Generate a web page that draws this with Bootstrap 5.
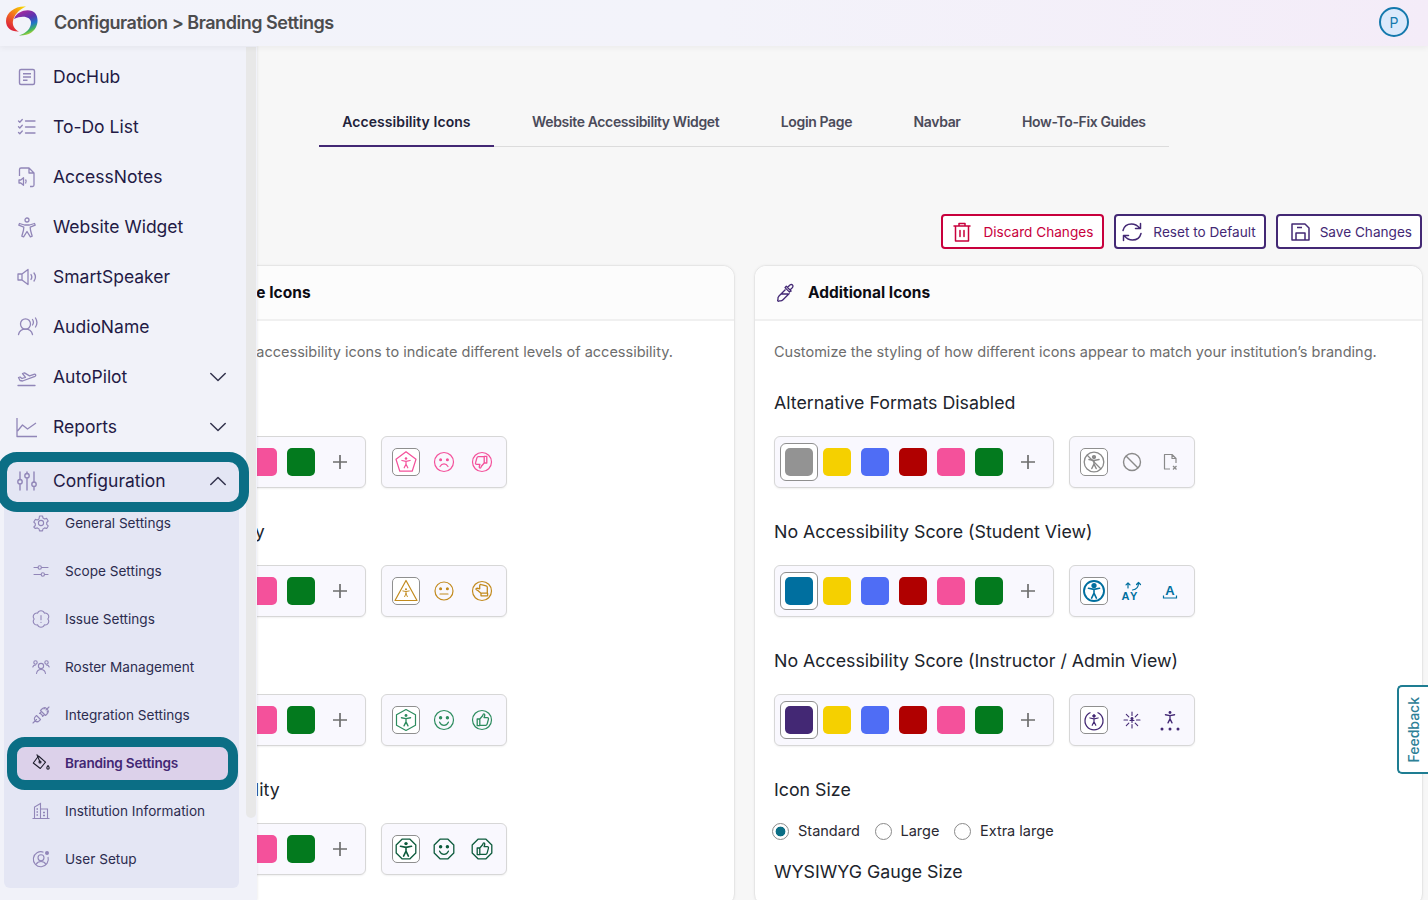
<!DOCTYPE html>
<html lang="en">
<head>
<meta charset="utf-8">
<title>Branding Settings</title>
<link href="https://cdn.jsdelivr.net/npm/bootstrap@5.3.0/dist/css/bootstrap.min.css" rel="stylesheet">
<style>
html,body{height:900px;overflow:hidden}
body{font-family:Inter,"Liberation Sans",sans-serif;background:#f7f7f7;color:#212529}
.topbar{height:46px;background:linear-gradient(90deg,#f2f3fa 0%,#f3f3fa 50%,#f4ecf8 100%);box-shadow:0 2px 6px rgba(0,0,0,.05);padding:0 19px 2px 6px;position:relative;z-index:3}
.crumb{font-size:18px;font-weight:600;color:#4c4c4e;margin-left:16px;letter-spacing:-.47px}
.avatar{width:30px;height:30px;border-radius:50%;border:2px solid #1479ad;background:#dbe9fb;color:#1479ad;font-size:14px}
.sidepanel{position:absolute;top:46px;left:0;width:257px;height:854px;background:#f1f2f9;box-shadow:1px 0 2px rgba(0,0,0,.06);z-index:2}
.sideinner{width:246px;padding-top:6px;position:relative;z-index:1}
.thumb{width:10px;height:771px;background:#e8e8e8;border-radius:0 0 6px 6px;margin-top:1px}
.topitem{height:50px;padding:0 20px 0 16px;font-size:17.5px;color:#231a45;gap:15px}
.topitem:hover,.topitem:focus{color:#231a45}
.ico22{width:22px;height:22px;color:#9186b8;flex:none}
.chev{width:16px;height:16px;margin-left:auto;color:#33334d;flex:none}
.cfgitem{height:40px;margin:10px 7px 0;padding:0 13px 2px 9px;background:#e4e6f4;border-radius:10px;outline:10px solid #0b6e85}
.subwrap{margin:-3px 7px 0 4px;padding-bottom:5px;background:#e4e6f4;border-radius:0 0 6px 6px}
.subitem{height:33px;margin:7.5px 11px 7.5px 13px;padding:0 0 0 15px;gap:15px;font-size:13.6px;color:#2c2c4f;border-radius:8px}
.subitem:hover,.subitem:focus{color:#2c2c4f}
.ico18{width:18px;height:18px;color:#9186b8;flex:none}
.subactive{background:#dcd1ea;outline:10px solid #0b6e85;color:#432874;font-weight:600;letter-spacing:-.2px}
.subactive:hover,.subactive:focus{color:#432874}
.subactive .ico18{color:#1d1d2b}
.mainpane{padding:51px 5px 0 66px}
.tabwrap{padding-right:1px}
.tabstrip{border-bottom:1px solid #dcdcdc;gap:15.500px;height:50px}
.tablink{height:50px;padding:0 23px;font-size:14px;font-weight:600;color:#4b4b5a;letter-spacing:-.37px;border-bottom:2px solid transparent}
.tablink:hover,.tablink:focus{color:#4b4b5a}
.tabactive{color:#22223a;border-bottom-color:#432874;margin-bottom:-1px;letter-spacing:.06px}
.tabactive:hover,.tabactive:focus{color:#22223a}
.actions{margin-top:67px;gap:10px;margin-bottom:16px;padding-right:1px}
.actbtn{height:35px;border:2px solid #432874;border-radius:4px;background:#fff;color:#432874;font-size:13.6px;padding:1px 8px 0 5px;gap:10px}
.actbtn:hover{background:#fff;color:#432874;border-color:#432874}
.actdanger{border-color:#c8003c;color:#c8003c;padding:1px 9px 0 8px;gap:10px}
.actdanger:hover{border-color:#c8003c;color:#c8003c}
.actsave{padding:1px 8px 0 11px;gap:9px}
.ico24{width:22px;height:22px;flex:none}
.pairrow{--bs-gutter-x:19px}
.panel{border:1px solid #e6e6e6;border-radius:12px;background:#fff;box-shadow:0 0 3px rgba(0,0,0,.05)}
.panel .card-header{height:55px;background:#fcfcfc;border-bottom:2px solid #f0f0f0;padding:0 21px;font-size:15.5px;font-weight:700;color:#0c0c14;gap:12px;border-radius:12px 12px 0 0}
.panel .card-body{padding:19px 19px 0}
.hdico{width:20px;height:20px;color:#432874;flex:none}
.blurb{font-size:14.530px;line-height:24px;color:#6d6d6d;margin:0 0 25px}
.grouptitle{font-size:17.8px;line-height:28px;font-weight:400;color:#20242c;margin:0 0 19px}
.pickrow{margin-bottom:30px;gap:15px}
.pickbox{height:52px;background:#f9f8fe;border:1px solid #d7d7d7;border-radius:6px;box-shadow:0 1px 2px rgba(0,0,0,.06)}
.colorbox{width:280px;padding:0 7px 0 5px}
.slot{width:38px;height:38px;border-radius:6px;border:1px solid transparent}
.slotsel{border-color:#8f8f8f;background:#fff}
.chip{width:28px;height:28px;border-radius:5px}
.plusico{width:16px;height:16px;color:#6e6e6e;margin-left:2px}
.iconbox{width:126px;padding:0 9px 0 10px;gap:10px}
.iconslot{width:28px;height:28px;border-radius:5px;border:1px solid transparent}
.iconslotsel{border-color:#8f8f8f;background:#fff}
.glyph{width:24px;height:24px;flex:none}
.radios{font-size:14.530px;margin:16px 0 14px -2px;height:24px;gap:14.500px}
.radios .form-check{margin:0;padding:0;gap:9px;min-height:0}
.radios .form-check-input{width:17px;height:17px;margin:0;float:none;background-color:#fff;border:1px solid #8a8a8a}
.radios .form-check-input:checked{background-color:#fff;border-color:#8a8a8a;background-image:radial-gradient(circle,#0b6e85 0 4.6px,transparent 5.2px)}
.radios .form-check-input:focus{box-shadow:none}
.radios .form-check-label{color:#2a2a33}
.feedback{position:absolute;right:0;top:685px;width:31px;height:89px;background:#fff;border:2px solid #1e7d92;border-right:0;border-radius:5px 0 0 5px;color:#2d8096;font-size:14px;font-weight:500;z-index:4}
.feedback span{writing-mode:vertical-rl;transform:rotate(180deg)}
.c-gray{color:#8a8a8a}.c-blue{color:#006f9f}.c-purple{color:#432874}.c-pink{color:#f4519b}.c-amber{color:#c28a1d}.c-green{color:#2c8c5e}.c-dark{color:#0d5b3c}
svg{display:block}
svg text{font-family:"Liberation Sans",sans-serif;font-weight:700}
</style>
</head>
<body>
<svg width="0" height="0" class="position-absolute">
 <defs>
  <linearGradient id="lgA" x1="0.8" y1="0" x2="0.2" y2="1"><stop offset="0" stop-color="#f7d300"/><stop offset=".45" stop-color="#f36f1f"/><stop offset="1" stop-color="#d8143f"/></linearGradient>
  <linearGradient id="lgB" x1="0.2" y1="0" x2="0.6" y2="1"><stop offset="0" stop-color="#b5289a"/><stop offset=".4" stop-color="#5a34b0"/><stop offset=".65" stop-color="#1f74c8"/><stop offset=".85" stop-color="#45b85a"/><stop offset="1" stop-color="#d9dc2c"/></linearGradient>
  <symbol id="man" viewBox="0 0 24 24"><circle cx="12" cy="6.600" r="1.700" fill="currentColor"/><path d="M6.500 9.300l5.500 1.100 5.500-1.100M12 10.400v3.800M12 14.200l-2.400 4.900M12 14.200l2.400 4.900" fill="none" stroke="currentColor" stroke-width="1.600" stroke-linecap="round" stroke-linejoin="round"/></symbol>
  <symbol id="up" viewBox="0 0 24 24"><path d="M7.200 11h2.600v6.600H7.200zM9.800 11l2.800-3.200c.4-1.200.6-2 1.300-1.900.9.100 1 1.100.7 2.100l-.5 1.700h3.200c1 0 1.400.8 1.100 1.600l-1.300 4.800c-.2.700-.7 1.200-1.400 1.200H9.800" fill="none" stroke="currentColor" stroke-width="1.300" stroke-linejoin="round"/></symbol>
  <symbol id="sm" viewBox="0 0 24 24"><circle cx="8.600" cy="9.800" r="1.100" fill="currentColor"/><circle cx="15.400" cy="9.800" r="1.100" fill="currentColor"/><path d="M7.600 14.200c1.100 2.200 2.700 3.200 4.400 3.200s3.300-1 4.400-3.200" fill="none" stroke="currentColor" stroke-width="1.300" stroke-linecap="round"/></symbol>
 </defs>
</svg>

<header class="topbar d-flex align-items-center">
 <svg width="32" height="32" viewBox="0 0 32 32">
  <path d="M20 .5C10 -.5 0 6 0 15c0 7 5.500 11 13 10.500C9.500 24 6 20 7 15 8 9 13 3.500 20 .5z" fill="url(#lgA)"/>
  <path d="M8 13C11 5.500 20 3 26 5c5 2 6.500 8 5 13.500C29 26 22 30 13 29.500 20 27.500 25 22.500 25 16.500 25 11 17 8.500 8 13z" fill="url(#lgB)"/>
 </svg>
 <span class="crumb">Configuration &gt; Branding Settings</span>
 <span class="avatar ms-auto d-flex align-items-center justify-content-center">P</span>
</header>

<aside class="sidepanel d-flex align-items-start">
 <nav class="sideinner">
  <ul class="nav flex-column">
   <li class="nav-item"><a class="nav-link topitem d-flex align-items-center" href="#">
    <svg class="ico22" viewBox="0 0 22 22" fill="none" stroke="currentColor" stroke-width="1.400"><rect x="3.500" y="3.500" width="15" height="15" rx="1.500"/><path d="M7 7.800h8M7 11h8M7 14.200h4.500"/></svg>DocHub</a></li>
   <li class="nav-item"><a class="nav-link topitem d-flex align-items-center" href="#">
    <svg class="ico22" viewBox="0 0 22 22" fill="none" stroke="currentColor" stroke-width="1.300" stroke-linecap="round" stroke-linejoin="round"><path d="M2.500 5l1.300 1.300L6.300 3.500M2.500 10.700l1.300 1.300 2.500-2.800M2.500 16.500l1.300 1.300 2.500-2.800M9.500 5h9.500M9.500 11h9.500M9.500 17h9.500"/></svg>To-Do List</a></li>
   <li class="nav-item"><a class="nav-link topitem d-flex align-items-center" href="#">
    <svg class="ico22" viewBox="0 0 22 22" fill="none" stroke="currentColor" stroke-width="1.300" stroke-linejoin="round"><path d="M3.500 10V3.500a1.500 1.500 0 0 1 1.500-1.500h8l5 5v12a1.500 1.500 0 0 1-1.500 1.500H14M13 2v5h5"/><path d="M3 14h1.800l2.700-2.300v7.600L4.800 17H3zM9.500 13.500c1 1.300 1 2.700 0 4"/></svg>AccessNotes</a></li>
   <li class="nav-item"><a class="nav-link topitem d-flex align-items-center" href="#">
    <svg class="ico22" viewBox="0 0 22 22" fill="none" stroke="currentColor" stroke-width="1.300" stroke-linejoin="round"><circle cx="11" cy="4" r="2"/><path d="M3.500 7.500l5 1.500h5l5-1.500.7 1.700-5 2 .3 3 1.700 6-1.800.7-3.400-5.400-3.400 5.400-1.800-.7 1.700-6 .3-3-5-2z"/></svg>Website Widget</a></li>
   <li class="nav-item"><a class="nav-link topitem d-flex align-items-center" href="#">
    <svg class="ico22" viewBox="0 0 22 22" fill="none" stroke="currentColor" stroke-width="1.300" stroke-linejoin="round" stroke-linecap="round"><path d="M2 8h4l6-4.500v15L6 14H2zM6 8v6M15 8.500c1 1.500 1 3.500 0 5M18 7c1.800 2.500 1.800 5.500 0 8"/></svg>SmartSpeaker</a></li>
   <li class="nav-item"><a class="nav-link topitem d-flex align-items-center" href="#">
    <svg class="ico22" viewBox="0 0 22 22" fill="none" stroke="currentColor" stroke-width="1.300" stroke-linecap="round"><ellipse cx="9.500" cy="8" rx="5" ry="5.200"/><path d="M2.500 18.500c.7-3 3.500-5.300 7-5.300s6.300 2.300 7 5.300M16.500 3.500c1 1.500 1 4 0 5.500M19.500 2c1.600 2.500 1.600 6.500 0 9"/></svg>AudioName</a></li>
   <li class="nav-item"><a class="nav-link topitem d-flex align-items-center" href="#">
    <svg class="ico22" viewBox="0 0 22 22" fill="none" stroke="currentColor" stroke-width="1.300" stroke-linejoin="round" stroke-linecap="round"><path d="M2 19.500h17M4 14.500l-1.500-3 1.500-.5 2 1.500 3.500-1.200-3-3.800 2-.6 5 3 4.500-1.600c1.500-.5 2.500 1.300 1 2L6.500 15z"/></svg>AutoPilot
    <svg class="chev" viewBox="0 0 16 16" fill="none" stroke="currentColor" stroke-width="1.500" stroke-linecap="round" stroke-linejoin="round"><path d="M.8 4.500L8 11.500l7.200-7"/></svg></a></li>
   <li class="nav-item"><a class="nav-link topitem d-flex align-items-center" href="#">
    <svg class="ico22" viewBox="0 0 22 22" fill="none" stroke="currentColor" stroke-width="1.300" stroke-linejoin="round"><path d="M1 2v18.500h20M1.500 15l5-6 5 4 8.500-6"/></svg>Reports
    <svg class="chev" viewBox="0 0 16 16" fill="none" stroke="currentColor" stroke-width="1.500" stroke-linecap="round" stroke-linejoin="round"><path d="M.8 4.500L8 11.500l7.200-7"/></svg></a></li>
   <li class="nav-item"><a class="nav-link topitem cfgitem d-flex align-items-center" href="#">
    <svg class="ico22" viewBox="0 0 22 22" fill="none" stroke="currentColor" stroke-width="1.400" stroke-linecap="round"><path d="M4 2v7.500M4 14v6M11 2v1.500M11 8v12M18 2v10M18 16.500V20"/><circle cx="4" cy="11.700" r="2.200"/><circle cx="11" cy="5.700" r="2.200"/><circle cx="18" cy="14.200" r="2.200"/></svg>Configuration
    <svg class="chev" viewBox="0 0 16 16" fill="none" stroke="currentColor" stroke-width="1.500" stroke-linecap="round" stroke-linejoin="round"><path d="M.8 11.500L8 4.500l7.200 7"/></svg></a></li>
  </ul>
  <ul class="nav flex-column subwrap">
   <li class="nav-item"><a class="nav-link subitem d-flex align-items-center" href="#">
    <svg class="ico18" viewBox="0 0 18 18" fill="none" stroke="currentColor" stroke-width="1.100" stroke-linejoin="round"><circle cx="9" cy="9" r="2.600"/><path d="M7.500 2h3l.5 2 1.700 1 2-.6 1.500 2.600-1.500 1.500v1.900l1.500 1.500-1.500 2.600-2-.6-1.700 1-.5 2h-3l-.5-2-1.700-1-2 .6L1.800 13l1.500-1.500V9.600L1.800 8l1.500-2.600 2 .6 1.700-1z"/></svg>General Settings</a></li>
   <li class="nav-item"><a class="nav-link subitem d-flex align-items-center" href="#">
    <svg class="ico18" viewBox="0 0 18 18" fill="none" stroke="currentColor" stroke-width="1.100" stroke-linecap="round"><path d="M2 5.500h4M9.500 5.500H16M2 12.500h7M12.500 12.500H16"/><circle cx="7.700" cy="5.500" r="1.700"/><circle cx="10.800" cy="12.500" r="1.700"/></svg>Scope Settings</a></li>
   <li class="nav-item"><a class="nav-link subitem d-flex align-items-center" href="#">
    <svg class="ico18" viewBox="0 0 18 18" fill="none" stroke="currentColor" stroke-width="1.100" stroke-linecap="round" stroke-linejoin="round"><path d="M5.600 3.100A3.600 3.600 0 0 1 12.400 3.100 3.600 3.600 0 0 1 15.800 9 3.600 3.600 0 0 1 12.400 14.900 3.600 3.600 0 0 1 5.600 14.900 3.600 3.600 0 0 1 2.200 9 3.600 3.600 0 0 1 5.600 3.100z"/><path d="M9 5.500v4.300M9 12.300v.2"/></svg>Issue Settings</a></li>
   <li class="nav-item"><a class="nav-link subitem d-flex align-items-center" href="#">
    <svg class="ico18" viewBox="0 0 18 18" fill="none" stroke="currentColor" stroke-width="1.100" stroke-linecap="round"><circle cx="9" cy="8" r="2.600"/><path d="M4.500 15.500c.4-2.500 2.200-4 4.500-4s4.100 1.500 4.500 4"/><circle cx="3.500" cy="4.500" r="1.700"/><circle cx="14.500" cy="4.500" r="1.700"/><path d="M.8 9c.4-1.300 1.300-2 2.700-2M17.200 9c-.4-1.300-1.300-2-2.700-2"/></svg>Roster Management</a></li>
   <li class="nav-item"><a class="nav-link subitem d-flex align-items-center" href="#">
    <svg class="ico18" viewBox="0 0 18 18" fill="none" stroke="currentColor" stroke-width="1.100" stroke-linecap="round" stroke-linejoin="round"><path d="M1 17l3.500-3.500M4.500 9.500l4 4-1.300 1.300a2.800 2.800 0 0 1-4-4zM8 7l3 3M7.500 7.500l1.700-1.700M10.500 10.500l1.700-1.700M8.500 4.500l5 5 1.500-1.500a3.500 3.500 0 0 0-5-5zM14 4l3-3M13 1.500l-1 1.500M16.500 5l-1.500 1"/></svg>Integration Settings</a></li>
   <li class="nav-item"><a class="nav-link subitem subactive d-flex align-items-center" href="#">
    <svg class="ico18" viewBox="0 0 18 18" fill="none" stroke="currentColor" stroke-width="1.100" stroke-linejoin="round" stroke-linecap="round"><path d="M6.500 2l7 6.200-5.200 6.300L1.300 9z"/><circle cx="8" cy="8" r="1"/><path d="M5 .8L7.700 7.200"/><path d="M16 11.500c.7 1 1.200 1.700 1.200 2.400a1.200 1.200 0 0 1-2.400 0c0-.7.500-1.400 1.200-2.400z"/></svg>Branding Settings</a></li>
   <li class="nav-item"><a class="nav-link subitem d-flex align-items-center" href="#">
    <svg class="ico18" viewBox="0 0 18 18" fill="none" stroke="currentColor" stroke-width="1.100"><path d="M.5 16.500h17M2.500 16.500V5l6-3.500v15M8.500 7h7v9.500"/><path d="M4.500 7h1.500M4.500 10h1.500M4.500 13h1.500M11 10.500h2M11 13.500h2" stroke-width="1.300"/></svg>Institution Information</a></li>
   <li class="nav-item"><a class="nav-link subitem d-flex align-items-center" href="#">
    <svg class="ico18" viewBox="0 0 18 18" fill="none" stroke="currentColor" stroke-width="1.100"><path d="M11.500 2.200A7.500 7.500 0 1 0 16 7"/><circle cx="9" cy="7.800" r="3"/><path d="M4 14.500c1-2 2.800-3 5-3s4 1 5 3"/><circle cx="15" cy="3" r="2" fill="currentColor" stroke="none"/></svg>User Setup</a></li>
  </ul>
 </nav>
 <div class="thumb"></div>
</aside>

<main class="mainpane">
 <div class="d-flex justify-content-center tabwrap">
  <nav class="nav tabstrip">
   <a class="nav-link tablink tabactive d-flex align-items-center" href="#">Accessibility Icons</a>
   <a class="nav-link tablink d-flex align-items-center" href="#">Website Accessibility Widget</a>
   <a class="nav-link tablink d-flex align-items-center" href="#">Login Page</a>
   <a class="nav-link tablink d-flex align-items-center" href="#">Navbar</a>
   <a class="nav-link tablink d-flex align-items-center" href="#">How-To-Fix Guides</a>
  </nav>
 </div>

 <div class="d-flex justify-content-end actions">
  <button type="button" class="btn actbtn actdanger d-flex align-items-center">
   <svg class="ico24" viewBox="0 0 22 22" fill="none" stroke="currentColor" stroke-width="1.500" stroke-linecap="round" stroke-linejoin="round"><path d="M3 5h16M8 5V2.500h6V5M4.500 5v15h13V5M9 9.500v6M13 9.500v6"/></svg>Discard Changes</button>
  <button type="button" class="btn actbtn d-flex align-items-center">
   <svg class="ico24" viewBox="0 0 22 22" fill="none" stroke="currentColor" stroke-width="1.500" stroke-linecap="round" stroke-linejoin="round"><path d="M2 9.500C3 5.500 6.500 3 10.500 3c3.500 0 6 1.500 8 4M19.500 2.500V7.500h-5M20 12.500c-1 4-4.500 6.500-8.500 6.500-3.500 0-6-1.500-8-4M2.500 19.500v-5h5"/></svg>Reset to Default</button>
  <button type="button" class="btn actbtn actsave d-flex align-items-center">
   <svg class="ico24" viewBox="0 0 22 22" fill="none" stroke="currentColor" stroke-width="1.500" stroke-linejoin="round"><path d="M3 3h13l4 4v12H3zM7 19v-7h9v7M8 6.500h5"/></svg>Save Changes</button>
 </div>

 <div class="row pairrow">
  <div class="col-6">
   <section class="card panel">
    <div class="card-header d-flex align-items-center">
     <svg class="hdico" viewBox="0 0 20 20" fill="none" stroke="currentColor" stroke-width="1.300"><circle cx="10" cy="10" r="7"/></svg>Accessibility Score Icons</div>
    <div class="card-body">
     <p class="blurb">Customize the styling of accessibility icons to indicate different levels of accessibility.</p>

     <h3 class="grouptitle">Low Accessibility</h3>
     <div class="d-flex pickrow">
      <div class="pickbox colorbox d-flex align-items-center">
       <span class="slot slotsel d-flex align-items-center justify-content-center"><span class="chip" style="background:#f4519b"></span></span>
       <span class="slot d-flex align-items-center justify-content-center"><span class="chip" style="background:#f5d000"></span></span>
       <span class="slot d-flex align-items-center justify-content-center"><span class="chip" style="background:#4f6df5"></span></span>
       <span class="slot d-flex align-items-center justify-content-center"><span class="chip" style="background:#b00000"></span></span>
       <span class="slot d-flex align-items-center justify-content-center"><span class="chip" style="background:#f4519b"></span></span>
       <span class="slot d-flex align-items-center justify-content-center"><span class="chip" style="background:#037a1e"></span></span>
       <span class="slot d-flex align-items-center justify-content-center"><svg class="plusico" viewBox="0 0 16 16" stroke="currentColor" stroke-width="1.700"><path d="M8 1v14M1 8h14"/></svg></span>
      </div>
      <div class="pickbox iconbox d-flex align-items-center c-pink">
       <span class="iconslot iconslotsel d-flex align-items-center justify-content-center"><svg class="glyph" viewBox="0 0 24 24" fill="none"><path d="M12 1.800l10 7.400-3.800 12H5.800L2 9.200z" stroke="currentColor" stroke-width="1.200" stroke-linejoin="round"/><use href="#man" x="3" y="3.500" width="18" height="18"/></svg></span>
       <span class="iconslot d-flex align-items-center justify-content-center"><svg class="glyph" viewBox="0 0 24 24" fill="none" stroke="currentColor" stroke-width="1.200"><circle cx="12" cy="12" r="9.500"/><circle cx="8.600" cy="9.800" r=".9" fill="currentColor"/><circle cx="15.400" cy="9.800" r=".9" fill="currentColor"/><path d="M8 16.500c1-1.800 2.400-2.700 4-2.700s3 .9 4 2.700" stroke-linecap="round"/></svg></span>
       <span class="iconslot d-flex align-items-center justify-content-center"><svg class="glyph" viewBox="0 0 24 24" fill="none" stroke="currentColor" stroke-width="1.200"><circle cx="12" cy="12" r="9.500"/><use href="#up" transform="rotate(180 12 12)"/></svg></span>
      </div>
     </div>

     <h3 class="grouptitle">Medium Accessibility</h3>
     <div class="d-flex pickrow">
      <div class="pickbox colorbox d-flex align-items-center">
       <span class="slot slotsel d-flex align-items-center justify-content-center"><span class="chip" style="background:#c28a1d"></span></span>
       <span class="slot d-flex align-items-center justify-content-center"><span class="chip" style="background:#f5d000"></span></span>
       <span class="slot d-flex align-items-center justify-content-center"><span class="chip" style="background:#4f6df5"></span></span>
       <span class="slot d-flex align-items-center justify-content-center"><span class="chip" style="background:#b00000"></span></span>
       <span class="slot d-flex align-items-center justify-content-center"><span class="chip" style="background:#f4519b"></span></span>
       <span class="slot d-flex align-items-center justify-content-center"><span class="chip" style="background:#037a1e"></span></span>
       <span class="slot d-flex align-items-center justify-content-center"><svg class="plusico" viewBox="0 0 16 16" stroke="currentColor" stroke-width="1.700"><path d="M8 1v14M1 8h14"/></svg></span>
      </div>
      <div class="pickbox iconbox d-flex align-items-center c-amber">
       <span class="iconslot iconslotsel d-flex align-items-center justify-content-center"><svg class="glyph" viewBox="0 0 24 24" fill="none"><path d="M12 1.500L23 21.500H1z" stroke="currentColor" stroke-width="1.200" stroke-linejoin="round"/><use href="#man" x="5" y="6.500" width="14" height="14"/></svg></span>
       <span class="iconslot d-flex align-items-center justify-content-center"><svg class="glyph" viewBox="0 0 24 24" fill="none" stroke="currentColor" stroke-width="1.200"><circle cx="12" cy="12" r="9"/><circle cx="8.600" cy="9.800" r=".9" fill="currentColor"/><circle cx="15.400" cy="9.800" r=".9" fill="currentColor"/><path d="M8 15h8" stroke-linecap="round"/></svg></span>
       <span class="iconslot d-flex align-items-center justify-content-center"><svg class="glyph" viewBox="0 0 24 24" fill="none" stroke="currentColor" stroke-width="1.200"><circle cx="12" cy="12" r="9.500"/><use href="#up" transform="rotate(-90 12 12)"/></svg></span>
      </div>
     </div>

     <h3 class="grouptitle">High Accessibility</h3>
     <div class="d-flex pickrow">
      <div class="pickbox colorbox d-flex align-items-center">
       <span class="slot slotsel d-flex align-items-center justify-content-center"><span class="chip" style="background:#2c8c5e"></span></span>
       <span class="slot d-flex align-items-center justify-content-center"><span class="chip" style="background:#f5d000"></span></span>
       <span class="slot d-flex align-items-center justify-content-center"><span class="chip" style="background:#4f6df5"></span></span>
       <span class="slot d-flex align-items-center justify-content-center"><span class="chip" style="background:#b00000"></span></span>
       <span class="slot d-flex align-items-center justify-content-center"><span class="chip" style="background:#f4519b"></span></span>
       <span class="slot d-flex align-items-center justify-content-center"><span class="chip" style="background:#037a1e"></span></span>
       <span class="slot d-flex align-items-center justify-content-center"><svg class="plusico" viewBox="0 0 16 16" stroke="currentColor" stroke-width="1.700"><path d="M8 1v14M1 8h14"/></svg></span>
      </div>
      <div class="pickbox iconbox d-flex align-items-center c-green">
       <span class="iconslot iconslotsel d-flex align-items-center justify-content-center"><svg class="glyph" viewBox="0 0 24 24" fill="none"><path d="M12 1.500l9.500 5.300v10.400L12 22.500l-9.500-5.300V6.800z" stroke="currentColor" stroke-width="1.200" stroke-linejoin="round"/><use href="#man" x="2" y="2" width="20" height="20"/></svg></span>
       <span class="iconslot d-flex align-items-center justify-content-center"><svg class="glyph" viewBox="0 0 24 24" fill="none" stroke="currentColor" stroke-width="1.200"><circle cx="12" cy="12" r="9.500"/><use href="#sm"/></svg></span>
       <span class="iconslot d-flex align-items-center justify-content-center"><svg class="glyph" viewBox="0 0 24 24" fill="none" stroke="currentColor" stroke-width="1.200"><circle cx="12" cy="12" r="9.500"/><use href="#up"/></svg></span>
      </div>
     </div>

     <h3 class="grouptitle">Very High Accessibility</h3>
     <div class="d-flex pickrow">
      <div class="pickbox colorbox d-flex align-items-center">
       <span class="slot slotsel d-flex align-items-center justify-content-center"><span class="chip" style="background:#0d5b3c"></span></span>
       <span class="slot d-flex align-items-center justify-content-center"><span class="chip" style="background:#f5d000"></span></span>
       <span class="slot d-flex align-items-center justify-content-center"><span class="chip" style="background:#4f6df5"></span></span>
       <span class="slot d-flex align-items-center justify-content-center"><span class="chip" style="background:#b00000"></span></span>
       <span class="slot d-flex align-items-center justify-content-center"><span class="chip" style="background:#f4519b"></span></span>
       <span class="slot d-flex align-items-center justify-content-center"><span class="chip" style="background:#037a1e"></span></span>
       <span class="slot d-flex align-items-center justify-content-center"><svg class="plusico" viewBox="0 0 16 16" stroke="currentColor" stroke-width="1.700"><path d="M8 1v14M1 8h14"/></svg></span>
      </div>
      <div class="pickbox iconbox d-flex align-items-center c-dark">
       <span class="iconslot iconslotsel d-flex align-items-center justify-content-center"><svg class="glyph" viewBox="0 0 24 24" fill="none"><path d="M8 2.200h8l5.800 5.800v8L16 21.800H8L2.200 16V8z" stroke="currentColor" stroke-width="1.300" stroke-linejoin="round"/><use href="#man"/></svg></span>
       <span class="iconslot d-flex align-items-center justify-content-center"><svg class="glyph" viewBox="0 0 24 24" fill="none" stroke="currentColor" stroke-width="1.300"><path d="M8 2.200h8l5.800 5.800v8L16 21.800H8L2.200 16V8z" stroke-linejoin="round"/><use href="#sm"/></svg></span>
       <span class="iconslot d-flex align-items-center justify-content-center"><svg class="glyph" viewBox="0 0 24 24" fill="none" stroke="currentColor" stroke-width="1.300"><path d="M8 2.200h8l5.800 5.800v8L16 21.800H8L2.200 16V8z" stroke-linejoin="round"/><use href="#up"/></svg></span>
      </div>
     </div>
    </div>
   </section>
  </div>

  <div class="col-6">
   <section class="card panel">
    <div class="card-header d-flex align-items-center">
     <svg class="hdico" viewBox="0 0 20 20" fill="none" stroke="currentColor" stroke-width="1.300" stroke-linejoin="round"><path d="M11.500 4.500l4 4M12.500 3.500c1.500-2 3-2.500 4-1.500s.5 2.500-1.500 4l-1 1 .8.800-1.300 1.300-4.500-4.500 1.300-1.300.8.800zM9.500 6.500L3 13c-1 1-1.300 2.300-1 3.500-.5.700-.5 1.200 0 1.500.3.300.8.300 1.500-.2 1.200.3 2.500 0 3.500-1l6.500-6.500M5 11h7"/></svg>Additional Icons</div>
    <div class="card-body">
     <p class="blurb">Customize the styling of how different icons appear to match your institution’s branding.</p>

     <h3 class="grouptitle">Alternative Formats Disabled</h3>
     <div class="d-flex pickrow">
      <div class="pickbox colorbox d-flex align-items-center">
       <span class="slot slotsel d-flex align-items-center justify-content-center"><span class="chip" style="background:#939393"></span></span>
       <span class="slot d-flex align-items-center justify-content-center"><span class="chip" style="background:#f5d000"></span></span>
       <span class="slot d-flex align-items-center justify-content-center"><span class="chip" style="background:#4f6df5"></span></span>
       <span class="slot d-flex align-items-center justify-content-center"><span class="chip" style="background:#b00000"></span></span>
       <span class="slot d-flex align-items-center justify-content-center"><span class="chip" style="background:#f4519b"></span></span>
       <span class="slot d-flex align-items-center justify-content-center"><span class="chip" style="background:#037a1e"></span></span>
       <span class="slot d-flex align-items-center justify-content-center"><svg class="plusico" viewBox="0 0 16 16" stroke="currentColor" stroke-width="1.700"><path d="M8 1v14M1 8h14"/></svg></span>
      </div>
      <div class="pickbox iconbox d-flex align-items-center c-gray">
       <span class="iconslot iconslotsel d-flex align-items-center justify-content-center"><svg class="glyph" viewBox="0 0 24 24" fill="none" stroke="currentColor" stroke-width="1.300"><circle cx="12" cy="12" r="9.800"/><use href="#man" x="1" y="1" width="22" height="22"/><path d="M5 5l14 14"/></svg></span>
       <span class="iconslot d-flex align-items-center justify-content-center"><svg class="glyph" viewBox="0 0 24 24" fill="none" stroke="currentColor" stroke-width="1.400"><circle cx="12" cy="12" r="8.500"/><path d="M6 6l12 12"/></svg></span>
       <span class="iconslot d-flex align-items-center justify-content-center"><svg class="glyph" viewBox="0 0 24 24" fill="none" stroke="currentColor" stroke-width="1.200" stroke-linejoin="round"><path d="M12 19H6.500V4.500H14l4 4V13M14 4.500v4h4"/><path d="M15 16l3.500 3.500M18.500 16L15 19.500" stroke-width="1.300"/></svg></span>
      </div>
     </div>

     <h3 class="grouptitle">No Accessibility Score (Student View)</h3>
     <div class="d-flex pickrow">
      <div class="pickbox colorbox d-flex align-items-center">
       <span class="slot slotsel d-flex align-items-center justify-content-center"><span class="chip" style="background:#006f9f"></span></span>
       <span class="slot d-flex align-items-center justify-content-center"><span class="chip" style="background:#f5d000"></span></span>
       <span class="slot d-flex align-items-center justify-content-center"><span class="chip" style="background:#4f6df5"></span></span>
       <span class="slot d-flex align-items-center justify-content-center"><span class="chip" style="background:#b00000"></span></span>
       <span class="slot d-flex align-items-center justify-content-center"><span class="chip" style="background:#f4519b"></span></span>
       <span class="slot d-flex align-items-center justify-content-center"><span class="chip" style="background:#037a1e"></span></span>
       <span class="slot d-flex align-items-center justify-content-center"><svg class="plusico" viewBox="0 0 16 16" stroke="currentColor" stroke-width="1.700"><path d="M8 1v14M1 8h14"/></svg></span>
      </div>
      <div class="pickbox iconbox d-flex align-items-center c-blue">
       <span class="iconslot iconslotsel d-flex align-items-center justify-content-center"><svg class="glyph" viewBox="0 0 24 24" fill="none" stroke="currentColor" stroke-width="1.900"><circle cx="12" cy="12" r="10"/><use href="#man"/></svg></span>
       <span class="iconslot d-flex align-items-center justify-content-center"><svg class="glyph" viewBox="0 0 24 24" fill="none" stroke="currentColor" stroke-width="1.200" stroke-linecap="round" stroke-linejoin="round"><path d="M8 9V4M6 5.800L8 3.800l2 2M12.500 11c3.500-.5 6-2.500 6-7M16.500 5.500l2-2 2 2"/><text x="1.500" y="21" font-size="11" fill="currentColor" stroke="none">A</text><text x="10" y="21" font-size="11" font-weight="400" fill="currentColor" stroke="none">Y</text></svg></span>
       <span class="iconslot d-flex align-items-center justify-content-center"><svg class="glyph" viewBox="0 0 24 24" fill="none" stroke="currentColor" stroke-width="1.200"><path d="M5.500 16.500v2.500h13v-2.500"/><text x="7.200" y="15.500" font-size="13" fill="currentColor" stroke="none">A</text></svg></span>
      </div>
     </div>

     <h3 class="grouptitle">No Accessibility Score (Instructor / Admin View)</h3>
     <div class="d-flex pickrow">
      <div class="pickbox colorbox d-flex align-items-center">
       <span class="slot slotsel d-flex align-items-center justify-content-center"><span class="chip" style="background:#432874"></span></span>
       <span class="slot d-flex align-items-center justify-content-center"><span class="chip" style="background:#f5d000"></span></span>
       <span class="slot d-flex align-items-center justify-content-center"><span class="chip" style="background:#4f6df5"></span></span>
       <span class="slot d-flex align-items-center justify-content-center"><span class="chip" style="background:#b00000"></span></span>
       <span class="slot d-flex align-items-center justify-content-center"><span class="chip" style="background:#f4519b"></span></span>
       <span class="slot d-flex align-items-center justify-content-center"><span class="chip" style="background:#037a1e"></span></span>
       <span class="slot d-flex align-items-center justify-content-center"><svg class="plusico" viewBox="0 0 16 16" stroke="currentColor" stroke-width="1.700"><path d="M8 1v14M1 8h14"/></svg></span>
      </div>
      <div class="pickbox iconbox d-flex align-items-center c-purple">
       <span class="iconslot iconslotsel d-flex align-items-center justify-content-center"><svg class="glyph" viewBox="0 0 24 24" fill="none" stroke="currentColor" stroke-width="1.300"><path d="M8.500 4.500A9 9 0 1 0 15.500 4.500"/><use href="#man" x="3" y="3" width="18" height="18"/></svg></span>
       <span class="iconslot d-flex align-items-center justify-content-center"><svg class="glyph" viewBox="0 0 24 24" fill="none" stroke="currentColor" stroke-width="1.100" stroke-linecap="round"><path d="M12 4v3.500M12 16.500V20M4 12h3.500M16.500 12H20M6.300 6.300l2.500 2.500M15.200 15.200l2.500 2.500M17.700 6.300l-2.500 2.500M8.800 15.200l-2.500 2.500"/><circle cx="12" cy="10.500" r="1" fill="currentColor"/><path d="M10 12.500h4M12 12.500v2"/></svg></span>
       <span class="iconslot d-flex align-items-center justify-content-center"><svg class="glyph" viewBox="0 0 24 24" fill="none"><use href="#man" x="2" y="-1" width="20" height="20"/><circle cx="4" cy="21" r="1.500" fill="currentColor"/><circle cx="12" cy="21" r="1.500" fill="currentColor"/><circle cx="20" cy="21" r="1.500" fill="currentColor"/></svg></span>
      </div>
     </div>

     <h3 class="grouptitle mb-0">Icon Size</h3>
     <div class="d-flex align-items-center radios">
      <div class="form-check d-flex align-items-center"><input class="form-check-input" type="radio" name="isize" id="r1" checked><label class="form-check-label" for="r1">Standard</label></div>
      <div class="form-check d-flex align-items-center"><input class="form-check-input" type="radio" name="isize" id="r2"><label class="form-check-label" for="r2">Large</label></div>
      <div class="form-check d-flex align-items-center"><input class="form-check-input" type="radio" name="isize" id="r3"><label class="form-check-label" for="r3">Extra large</label></div>
     </div>
     <h3 class="grouptitle">WYSIWYG Gauge Size</h3>
    </div>
   </section>
  </div>
 </div>
</main>

<div class="feedback d-flex align-items-center justify-content-center"><span>Feedback</span></div>
<script src="https://cdn.jsdelivr.net/npm/bootstrap@5.3.0/dist/js/bootstrap.bundle.min.js"></script>
</body>
</html>
